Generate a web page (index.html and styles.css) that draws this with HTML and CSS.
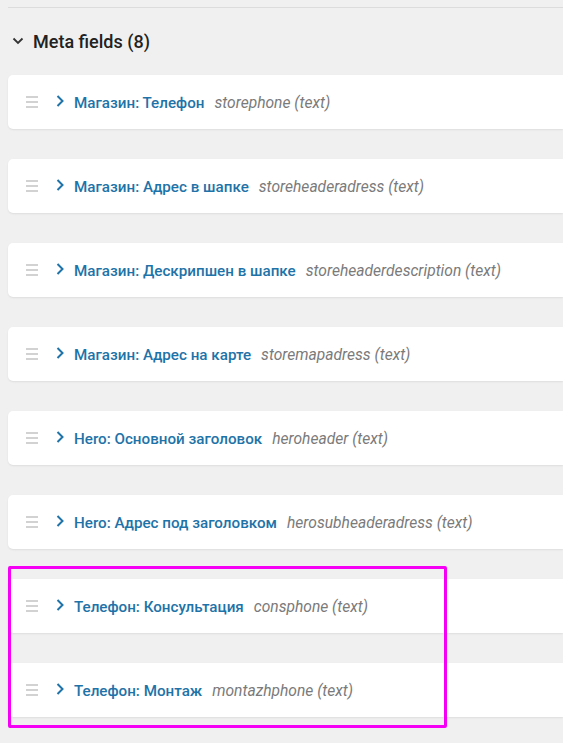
FILE: index.html
```html
<!DOCTYPE html>
<html lang="ru">
<head>
<meta charset="utf-8">
<link rel="stylesheet" href="styles.css">
</head>
<body>
<div class="page">
  <div class="divider"></div>
  <div class="section-head">
    <svg class="chev-down" width="12" height="8" viewBox="0 0 12 8"><path d="M1.5 1.5 L6 6 L10.5 1.5" fill="none" stroke="#333" stroke-width="1.8"/></svg>
    <span class="section-title">Meta fields (8)</span>
  </div>
  <div class="list">
    <div class="card"><span class="handle"><i></i><i></i><i></i></span><svg class="chev-right" width="8" height="12" viewBox="0 0 8 12"><path d="M1.5 1 L6.5 6 L1.5 11" fill="none" stroke="#1e73a8" stroke-width="2"/></svg><span class="title">Магазин: Телефон</span><span class="slug">storephone (text)</span></div>
    <div class="card"><span class="handle"><i></i><i></i><i></i></span><svg class="chev-right" width="8" height="12" viewBox="0 0 8 12"><path d="M1.5 1 L6.5 6 L1.5 11" fill="none" stroke="#1e73a8" stroke-width="2"/></svg><span class="title">Магазин: Адрес в шапке</span><span class="slug">storeheaderadress (text)</span></div>
    <div class="card"><span class="handle"><i></i><i></i><i></i></span><svg class="chev-right" width="8" height="12" viewBox="0 0 8 12"><path d="M1.5 1 L6.5 6 L1.5 11" fill="none" stroke="#1e73a8" stroke-width="2"/></svg><span class="title">Магазин: Дескрипшен в шапке</span><span class="slug">storeheaderdescription (text)</span></div>
    <div class="card"><span class="handle"><i></i><i></i><i></i></span><svg class="chev-right" width="8" height="12" viewBox="0 0 8 12"><path d="M1.5 1 L6.5 6 L1.5 11" fill="none" stroke="#1e73a8" stroke-width="2"/></svg><span class="title">Магазин: Адрес на карте</span><span class="slug">storemapadress (text)</span></div>
    <div class="card"><span class="handle"><i></i><i></i><i></i></span><svg class="chev-right" width="8" height="12" viewBox="0 0 8 12"><path d="M1.5 1 L6.5 6 L1.5 11" fill="none" stroke="#1e73a8" stroke-width="2"/></svg><span class="title">Hero: Основной заголовок</span><span class="slug">heroheader (text)</span></div>
    <div class="card"><span class="handle"><i></i><i></i><i></i></span><svg class="chev-right" width="8" height="12" viewBox="0 0 8 12"><path d="M1.5 1 L6.5 6 L1.5 11" fill="none" stroke="#1e73a8" stroke-width="2"/></svg><span class="title">Hero: Адрес под заголовком</span><span class="slug">herosubheaderadress (text)</span></div>
    <div class="card"><span class="handle"><i></i><i></i><i></i></span><svg class="chev-right" width="8" height="12" viewBox="0 0 8 12"><path d="M1.5 1 L6.5 6 L1.5 11" fill="none" stroke="#1e73a8" stroke-width="2"/></svg><span class="title">Телефон: Консультация</span><span class="slug">consphone (text)</span></div>
    <div class="card"><span class="handle"><i></i><i></i><i></i></span><svg class="chev-right" width="8" height="12" viewBox="0 0 8 12"><path d="M1.5 1 L6.5 6 L1.5 11" fill="none" stroke="#1e73a8" stroke-width="2"/></svg><span class="title">Телефон: Монтаж</span><span class="slug">montazhphone (text)</span></div>
  </div>
  <div class="highlight"></div>
</div>
</body>
</html>
```

FILE: styles.css
```css
html, body {
  margin: 0;
  padding: 0;
  background: #f0f0f0;
}
body {
  font-family: Roboto, "Noto Sans", sans-serif;
  height: 743px;
  overflow: hidden;
}
.page {
  position: relative;
  padding: 7px 0 0 8px;
}
.divider {
  height: 1px;
  background: #dcdcdc;
}
.section-head {
  display: flex;
  align-items: center;
  height: 66px;
  padding-left: 4px;
  margin-bottom: 1px;
}
.chev-down {
  margin-right: 9px;
}
.section-title {
  font-size: 18px;
  font-weight: 500;
  color: #222;
}
.list {
  display: flex;
  flex-direction: column;
  gap: 30px;
}
.card {
  height: 54px;
  background: #fff;
  border-radius: 5px 0 0 5px;
  box-shadow: 0 1px 2px rgba(0, 0, 0, 0.08);
  display: flex;
  align-items: center;
  padding-left: 18px;
}
.handle {
  display: flex;
  flex-direction: column;
  gap: 3px;
  width: 12px;
  margin-right: 18px;
}
.handle i {
  display: block;
  height: 2px;
  background: #d2d2d2;
}
.chev-right {
  margin-right: 10px;
  margin-top: -2px;
}
.title {
  font-size: 15.2px;
  font-weight: 500;
  color: #1e73a8;
  margin-right: 10px;
  padding-top: 1px;
}
.slug {
  font-size: 15.6px;
  font-style: italic;
  color: #7a7a7a;
  padding-top: 1px;
}
.highlight {
  position: absolute;
  left: 8px;
  top: 566px;
  width: 433px;
  height: 156px;
  border: 3px solid #f500f5;
  border-radius: 2px;
}
```
